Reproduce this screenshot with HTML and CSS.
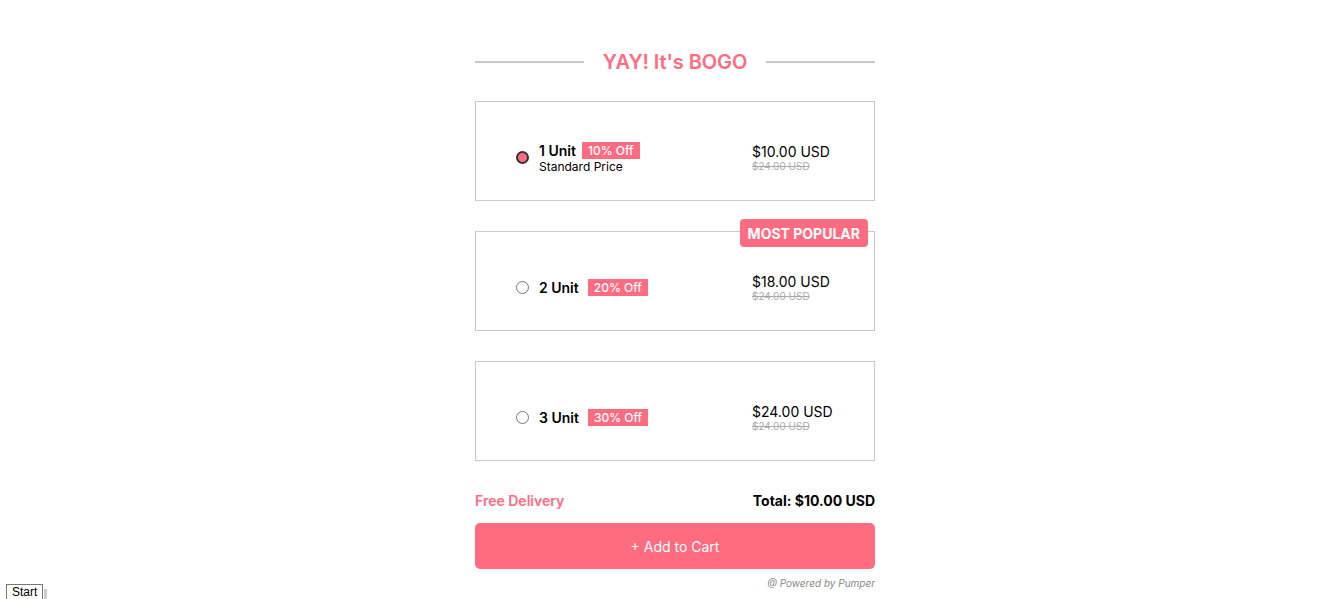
FILE: index.html
```html
<!DOCTYPE html>
<html>
<head>
<meta charset="utf-8">
<link rel="stylesheet" href="styles.css">
</head>
<body>
<div class="widget">
  <div class="heading">
    <span class="rule"></span>
    <h2 class="title">YAY! It's BOGO</h2>
    <span class="rule"></span>
  </div>

  <div class="offers">
    <div class="offer">
      <div class="offer-left">
        <span class="radio checked"></span>
        <div class="offer-info">
          <div class="offer-row tight">
            <span class="units">1 Unit</span>
            <span class="badge">10% Off</span>
          </div>
          <div class="sub">Standard Price</div>
        </div>
      </div>
      <div class="prices">
        <div class="price">$10.00 USD</div>
        <div class="old">$24.00 USD</div>
      </div>
    </div>

    <div class="offer">
      <span class="popular">MOST POPULAR</span>
      <div class="offer-left">
        <span class="radio"></span>
        <div class="offer-info">
          <div class="offer-row">
            <span class="units">2 Unit</span>
            <span class="badge">20% Off</span>
          </div>
        </div>
      </div>
      <div class="prices">
        <div class="price">$18.00 USD</div>
        <div class="old">$24.00 USD</div>
      </div>
    </div>

    <div class="offer">
      <div class="offer-left">
        <span class="radio"></span>
        <div class="offer-info">
          <div class="offer-row">
            <span class="units">3 Unit</span>
            <span class="badge">30% Off</span>
          </div>
        </div>
      </div>
      <div class="prices">
        <div class="price">$24.00 USD</div>
        <div class="old">$24.00 USD</div>
      </div>
    </div>
  </div>

  <div class="summary">
    <span class="delivery">Free Delivery</span>
    <span class="total">Total: $10.00 USD</span>
  </div>
  <button class="cart">+ Add to Cart</button>
  <div class="powered">@ Powered by Pumper</div>
</div>
<div class="start">Start</div><span class="start-grip"></span>
</body>
</html>
```
FILE: styles.css
```css
html, body {
  margin: 0;
  padding: 0;
  background: #fff;
  font-family: Inter, "Noto Sans", sans-serif;
  color: #000;
}

.widget {
  width: 400px;
  margin: 0 auto;
  padding-top: 48px;
  position: relative;
  left: 7px;
}

.heading {
  display: flex;
  align-items: center;
  gap: 19px;
  height: 28px;
}

.rule {
  flex: 1;
  height: 2px;
  background: #c8c8c8;
}

.title {
  margin: 0;
  font-size: 20px;
  font-weight: 600;
  color: #ff6b81;
  letter-spacing: -0.1px;
}

.offers {
  margin-top: 25px;
  display: flex;
  flex-direction: column;
  gap: 30px;
}

.offer {
  position: relative;
  height: 100px;
  box-sizing: border-box;
  border: 1px solid #c8c8c8;
  display: flex;
  align-items: center;
  justify-content: space-between;
  padding: 13px 38px 0 40px;
}

.offer-left {
  display: flex;
  align-items: center;
  gap: 10px;
}

.radio {
  width: 13px;
  height: 13px;
  box-sizing: border-box;
  border-radius: 50%;
  border: 1px solid #767676;
  background: #fff;
}

.radio.checked {
  border: 2px solid #333;
  background: #ff6b81;
}

.offer-info {
  display: flex;
  flex-direction: column;
}

.offer-row {
  display: flex;
  align-items: center;
  gap: 9px;
}

.offer-row.tight {
  gap: 6px;
}

.units {
  font-size: 14px;
  font-weight: 600;
  line-height: 17px;
}

.badge {
  background: #ff6b81;
  color: #fff;
  font-size: 12px;
  font-weight: 500;
  line-height: 17px;
  padding: 0 6px;
}

.sub {
  font-size: 12px;
  line-height: 15px;
}

.prices {
  white-space: nowrap;
  width: 84px;
}

.price {
  font-size: 14px;
  line-height: 17px;
}

.old {
  font-size: 10px;
  line-height: 13px;
  color: #aaa;
  text-decoration: line-through;
}

.popular {
  position: absolute;
  top: -13px;
  right: 6px;
  background: #ff6b81;
  color: #fff;
  font-size: 14px;
  font-weight: 700;
  line-height: 26px;
  padding: 2px 8px 0;
  border-radius: 4px;
}

.summary {
  margin-top: 31px;
  display: flex;
  justify-content: space-between;
  align-items: center;
  font-size: 14px;
  line-height: 17px;
}

.delivery {
  color: #ff6b81;
  font-weight: 600;
}

.total {
  font-weight: 700;
}

.cart {
  display: block;
  width: 100%;
  margin-top: 14px;
  height: 46px;
  border: none;
  border-radius: 5px;
  background: #ff6b81;
  color: #fff;
  font-family: Inter, "Noto Sans", sans-serif;
  font-size: 14px;
}

.powered {
  margin-top: 8px;
  text-align: right;
  font-size: 10px;
  font-style: italic;
  color: #888;
}

.start {
  position: fixed;
  left: 6px;
  bottom: -3px;
  border: 1px solid #767676;
  background: #fff;
  font-family: "Liberation Sans", Arial, sans-serif;
  font-size: 12px;
  line-height: 15px;
  padding: 0 5px 1px;
}

.start-grip {
  position: fixed;
  left: 44px;
  bottom: 0;
  width: 3px;
  height: 10px;
  background: #ccc;
}
```
